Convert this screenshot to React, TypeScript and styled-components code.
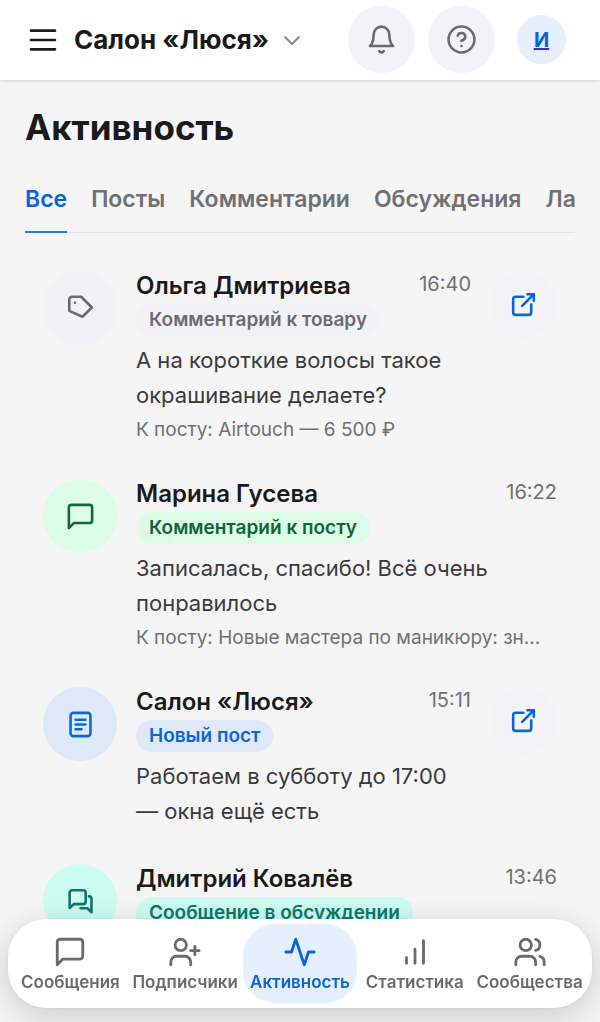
import React from 'react';
import styled, { createGlobalStyle, css } from 'styled-components';

const GlobalStyle = createGlobalStyle`
  *, *::before, *::after { box-sizing: border-box; }
  body {
    margin: 0;
    background: #f5f5f5;
    color: #1a1a1a;
    font-family: Inter, "Noto Sans", sans-serif;
  }
  button { font: inherit; border: 0; padding: 0; background: none; cursor: pointer; }
  h1, h2, p, ul { margin: 0; padding: 0; }
  ul { list-style: none; }
`;

const Svg = styled.svg<{ $size: number }>`
  display: block;
  flex: none;
  width: ${(p) => p.$size}px;
  height: ${(p) => p.$size}px;
  fill: none;
  stroke: currentColor;
  stroke-linecap: round;
  stroke-linejoin: round;
`;

const paths = {
  menu: 'M3 5h18M3 12h18M3 19h18',
  chevron: 'm5 9 7 7 7-7',
  bell: 'M18 8A6 6 0 0 0 6 8c0 7-3 9-3 9h18s-3-2-3-9M13.73 21a2 2 0 0 1-3.46 0',
  help: 'M22 12a10 10 0 1 1-20 0 10 10 0 0 1 20 0M9.09 9a3 3 0 0 1 5.83 1c0 2-3 3-3 3M12 17h.01',
  tag: 'M5.5 2.900h7l8.300 8.300-7.300 7.200L3.300 13.800V5.100a2.200 2.200 0 0 1 2.200-2.200zM7.700 7.500h.01',
  message: 'M21 15a2 2 0 0 1-2 2H7l-4 4V5a2 2 0 0 1 2-2h14a2 2 0 0 1 2 2z',
  post: 'M6.500 3h11a2.200 2.200 0 0 1 2.200 2.200v13.600a2.200 2.200 0 0 1-2.200 2.200h-11a2.200 2.200 0 0 1-2.200-2.200V5.200A2.200 2.200 0 0 1 6.500 3M8.200 8.300h7.600M8.200 12h7.600M8.200 15.700h4.600',
  chats: 'M14 14H6.800l-3.200 3V5.300a2 2 0 0 1 2-2H14a2 2 0 0 1 2 2V12a2 2 0 0 1-2 2zM18.500 8a2 2 0 0 1 2 2v10.300l-3.200-3.100H12',
  external: 'M12 6H6a2 2 0 0 0-2 2v10a2 2 0 0 0 2 2h10a2 2 0 0 0 2-2v-6M11 13l9-9M15 4h5v5',
  userPlus: 'M16 21v-2a4 4 0 0 0-4-4H6a4 4 0 0 0-4 4v2M13 7a4 4 0 1 1-8 0 4 4 0 0 1 8 0M19 8v6M22 11h-6',
  activity: 'M22 12h-4l-3 9L9 3l-3 9H2',
  bars: 'M6 20v-4M12 20V10M18 20V4',
  users: 'M16 21v-2a4 4 0 0 0-4-4H6a4 4 0 0 0-4 4v2M13 7a4 4 0 1 1-8 0 4 4 0 0 1 8 0M22 21v-2a4 4 0 0 0-3-3.870M16 3.130a4 4 0 0 1 0 7.750',
};

type IconName = keyof typeof paths;

function Icon({ name, size, stroke = 2 }: { name: IconName; size: number; stroke?: number }) {
  return (
    <Svg viewBox="0 0 24 24" $size={size} strokeWidth={stroke} aria-hidden="true">
      <path d={paths[name]} />
    </Svg>
  );
}

const Screen = styled.div`
  display: flex;
  flex-direction: column;
  height: 100vh;
`;

const Header = styled.header`
  display: flex;
  align-items: center;
  gap: 13px;
  padding: 6px 25px 7px 27px;
  background: #fff;
  box-shadow: 0 1px 3px rgba(0, 0, 0, 0.14);
  z-index: 1;
`;

const MenuButton = styled.button`
  color: #1a1a1a;
`;

const AccountButton = styled.button`
  display: flex;
  align-items: center;
  gap: 11px;
  margin-right: auto;
  padding-left: 2px;
  font-size: 26px;
  line-height: 32px;
  font-weight: 700;
  color: #1a1a1a;
  white-space: nowrap;

  svg { color: #8a8a8a; }
`;

const RoundButton = styled.button<{ $accent?: boolean }>`
  display: flex;
  flex: none;
  align-items: center;
  justify-content: center;
  width: 67px;
  height: 67px;
  border-radius: 50%;
  background: #f2f2f7;
  color: ${(p) => (p.$accent ? '#0a66d6' : '#6b6b6f')};
`;

const ProfileLink = styled.a`
  display: flex;
  flex: none;
  justify-content: center;
  width: 67px;
  color: #3b2fc0;
`;

const Avatar = styled.span`
  width: 49px;
  height: 49px;
  border-radius: 50%;
  background: #e5effe;
  font-size: 20px;
  line-height: 50px;
  font-weight: 700;
  text-align: center;
  text-decoration: underline;
  text-decoration-color: #3b2fc0;
  color: #0a66d6;
`;

const Main = styled.main`
  flex: 1;
  min-height: 0;
  overflow-y: auto;
  scrollbar-width: none;
  padding: 24px 25px 120px;
`;

const Title = styled.h1`
  font-size: 35px;
  line-height: 46px;
  font-weight: 700;
`;

const Tabs = styled.div`
  display: flex;
  gap: 24px;
  margin-top: 31px;
  overflow: hidden;
  box-shadow: inset 0 -1px #e2e2e4;
`;

const Tab = styled.button<{ $active?: boolean }>`
  flex: none;
  height: 52px;
  padding-bottom: 14px;
  border-bottom: 2px solid ${(p) => (p.$active ? '#2a7de1' : 'transparent')};
  font-size: 23px;
  line-height: 32px;
  font-weight: 600;
  color: ${(p) => (p.$active ? '#0a66d6' : '#707072')};
`;

const Feed = styled.ul`
  display: flex;
  flex-direction: column;
  gap: 35px;
  padding: 38px 18px 0;
`;

const Item = styled.li`
  display: flex;
  align-items: flex-start;
  gap: 19px;
`;

type Tone = 'gray' | 'green' | 'blue' | 'teal';

const tones = {
  gray: css`background: #f2f2f6; color: #6b6b6f;`,
  green: css`background: #dcfce7; color: #166534;`,
  blue: css`background: #dde9f8; color: #0a66d6;`,
  teal: css`background: #ccfbef; color: #0f766e;`,
};

const Badge = styled.span<{ $tone: Tone }>`
  display: flex;
  flex: none;
  align-items: center;
  justify-content: center;
  width: 74px;
  height: 74px;
  border-radius: 50%;
  ${(p) => tones[p.$tone]}
`;

const Body = styled.div`
  flex: 1;
  min-width: 0;
`;

const Heading = styled.div`
  display: flex;
  justify-content: space-between;
  gap: 12px;
  padding-bottom: 3px;
`;

const Name = styled.h2`
  font-size: 24px;
  line-height: 30px;
  font-weight: 600;
`;

const Time = styled.time`
  font-size: 20px;
  line-height: 26px;
  color: #707072;
`;

const Chip = styled.span<{ $tone: Tone }>`
  display: block;
  width: fit-content;
  padding: 0 13px;
  border-radius: 16px;
  font-size: 19px;
  line-height: 32px;
  font-weight: 600;
  ${(p) => tones[p.$tone]}
`;

const Message = styled.p`
  margin-top: 7px;
  font-size: 22px;
  line-height: 35px;
  color: #3a3a3c;
`;

const Source = styled.p`
  margin-top: 3px;
  overflow: hidden;
  font-size: 19px;
  line-height: 28px;
  white-space: nowrap;
  text-overflow: ellipsis;
  color: #707072;
`;

const NavBar = styled.nav`
  position: fixed;
  z-index: 2;
  right: 8px;
  bottom: 14px;
  left: 8px;
  display: flex;
  padding: 5px;
  border-radius: 38px;
  background: #fff;
  box-shadow: 0 8px 32px rgba(0, 0, 0, 0.18), 0 0 3px rgba(0, 0, 0, 0.06);
`;

const NavItem = styled.a<{ $active?: boolean }>`
  display: flex;
  flex: 1 1 0;
  min-width: 0;
  flex-direction: column;
  align-items: center;
  gap: 2px;
  padding: 11px 0 9px;
  border-radius: 32px;
  background: ${(p) => (p.$active ? '#e5effe' : 'transparent')};
  color: ${(p) => (p.$active ? '#0a66d6' : '#6b6b6f')};
  font-size: 17px;
  line-height: 23px;
  font-weight: 600;
  text-decoration: none;
  white-space: nowrap;
`;

type Entry = {
  name: string;
  time: string;
  kind: string;
  tone: Tone;
  icon: IconName;
  text?: string;
  source?: string;
  link?: boolean;
};

const entries: Entry[] = [
  {
    name: 'Ольга Дмитриева', time: '16:40', kind: 'Комментарий к товару', tone: 'gray', icon: 'tag',
    text: 'А на короткие волосы такое окрашивание делаете?', source: 'К посту: Airtouch — 6 500 ₽', link: true,
  },
  {
    name: 'Марина Гусева', time: '16:22', kind: 'Комментарий к посту', tone: 'green', icon: 'message',
    text: 'Записалась, спасибо! Всё очень понравилось', source: 'К посту: Новые мастера по маникюру: зн...',
  },
  {
    name: 'Салон «Люся»', time: '15:11', kind: 'Новый пост', tone: 'blue', icon: 'post',
    text: 'Работаем в субботу до 17:00 — окна ещё есть', link: true,
  },
  { name: 'Дмитрий Ковалёв', time: '13:46', kind: 'Сообщение в обсуждении', tone: 'teal', icon: 'chats' },
];

const tabs = ['Все', 'Посты', 'Комментарии', 'Обсуждения', 'Лайки'];

const sections: { label: string; icon: IconName }[] = [
  { label: 'Сообщения', icon: 'message' },
  { label: 'Подписчики', icon: 'userPlus' },
  { label: 'Активность', icon: 'activity' },
  { label: 'Статистика', icon: 'bars' },
  { label: 'Сообщества', icon: 'users' },
];

export default function App() {
  const [tab, setTab] = React.useState('Все');
  return (
    <Screen>
      <GlobalStyle />
      <Header>
        <MenuButton aria-label="Меню"><Icon name="menu" size={32} /></MenuButton>
        <AccountButton>
          Салон «Люся»
          <Icon name="chevron" size={24} />
        </AccountButton>
        <RoundButton aria-label="Уведомления"><Icon name="bell" size={31} /></RoundButton>
        <RoundButton aria-label="Помощь"><Icon name="help" size={31} /></RoundButton>
        <ProfileLink href="#profile"><Avatar>И</Avatar></ProfileLink>
      </Header>
      <Main>
        <Title>Активность</Title>
        <Tabs role="tablist">
          {tabs.map((t) => (
            <Tab key={t} role="tab" aria-selected={t === tab} $active={t === tab} onClick={() => setTab(t)}>{t}</Tab>
          ))}
        </Tabs>
        <Feed>
          {entries.map((e) => (
            <Item key={e.name}>
              <Badge $tone={e.tone}><Icon name={e.icon} size={31} /></Badge>
              <Body>
                <Heading>
                  <Name>{e.name}</Name>
                  <Time>{e.time}</Time>
                </Heading>
                <Chip $tone={e.tone}>{e.kind}</Chip>
                {e.text && <Message>{e.text}</Message>}
                {e.source && <Source>{e.source}</Source>}
              </Body>
              {e.link && (
                <RoundButton $accent aria-label="Открыть"><Icon name="external" size={31} /></RoundButton>
              )}
            </Item>
          ))}
        </Feed>
      </Main>
      <NavBar>
        {sections.map((s) => (
          <NavItem key={s.label} href="#" $active={s.label === 'Активность'}>
            <Icon name={s.icon} size={34} />
            {s.label}
          </NavItem>
        ))}
      </NavBar>
    </Screen>
  );
}
